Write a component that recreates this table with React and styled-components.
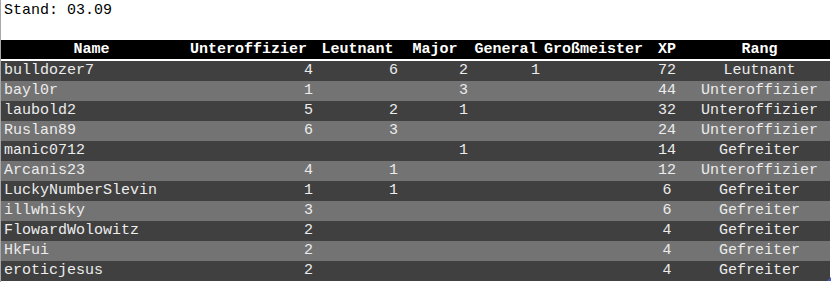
import React from "react";
import styled, { createGlobalStyle } from "styled-components";

const Global = createGlobalStyle`
  html, body { margin: 0; padding: 0; background: #fff; }
  body { font-family: "Liberation Mono", "Courier New", monospace; font-size: 15px; }
`;

const Page = styled.div`
  position: relative;
  width: 831px;
  height: 282px;
  border-left: 1px solid #a8a8a8;
  overflow: hidden;
`;

const StandBar = styled.div`
  height: 40px;
  box-sizing: border-box;
  padding: 2px 3px;
  line-height: 17px;
  color: #000;
`;

const Table = styled.table`
  border-collapse: collapse;
  table-layout: fixed;
  width: 829px;
  color: #ececec;
  font-family: "Liberation Mono", "Courier New", monospace;
  font-size: 15px;
`;

const HeadRow = styled.tr`
  background: #000;
  height: 19px;
  border-bottom: 2px solid #fff;
`;

const Th = styled.th`
  font-weight: bold;
  color: #fff;
  padding: 0;
  line-height: 19px;
  text-align: center;
  white-space: nowrap;
  overflow: visible;
`;

const Row = styled.tr`
  background: ${(p) => (p.$light ? "#737373" : "#404040")};
  height: 20px;
`;

const Td = styled.td`
  padding: 0 ${(p) => (p.$align === "right" ? "2px" : "0")} 0 ${(p) => (p.$align === "left" ? "3px" : "0")};
  line-height: 20px;
  text-align: ${(p) => p.$align};
  white-space: nowrap;
`;

const Grip = styled.svg`
  position: absolute;
  right: 1px;
  bottom: 1px;
`;

const cols = [
  { key: "name", label: "Name", width: 181, align: "left" },
  { key: "u", label: "Unteroffizier", width: 133, align: "right" },
  { key: "l", label: "Leutnant", width: 85, align: "right" },
  { key: "m", label: "Major", width: 70, align: "right" },
  { key: "g", label: "General", width: 72, align: "right" },
  { key: "gm", label: "Großmeister", width: 103, align: "right" },
  { key: "xp", label: "XP", width: 44, align: "center" },
  { key: "rang", label: "Rang", width: 141, align: "center" },
];

const rows = [
  { name: "bulldozer7", u: 4, l: 6, m: 2, g: 1, xp: 72, rang: "Leutnant" },
  { name: "bayl0r", u: 1, m: 3, xp: 44, rang: "Unteroffizier" },
  { name: "laubold2", u: 5, l: 2, m: 1, xp: 32, rang: "Unteroffizier" },
  { name: "Ruslan89", u: 6, l: 3, xp: 24, rang: "Unteroffizier" },
  { name: "manic0712", m: 1, xp: 14, rang: "Gefreiter" },
  { name: "Arcanis23", u: 4, l: 1, xp: 12, rang: "Unteroffizier" },
  { name: "LuckyNumberSlevin", u: 1, l: 1, xp: 6, rang: "Gefreiter" },
  { name: "illwhisky", u: 3, xp: 6, rang: "Gefreiter" },
  { name: "FlowardWolowitz", u: 2, xp: 4, rang: "Gefreiter" },
  { name: "HkFui", u: 2, xp: 4, rang: "Gefreiter" },
  { name: "eroticjesus", u: 2, xp: 4, rang: "Gefreiter" },
];

export default function App() {
  return (
    <>
      <Global />
      <Page>
        <StandBar>Stand: 03.09</StandBar>
        <Table>
          <colgroup>
            {cols.map((c) => (
              <col key={c.key} style={{ width: c.width }} />
            ))}
          </colgroup>
          <thead>
            <HeadRow>
              {cols.map((c) => (
                <Th key={c.key}>{c.label}</Th>
              ))}
            </HeadRow>
          </thead>
          <tbody>
            {rows.map((r, i) => (
              <Row key={r.name} $light={i % 2 === 1}>
                {cols.map((c) => (
                  <Td key={c.key} $align={c.align}>
                    {r[c.key] ?? ""}
                  </Td>
                ))}
              </Row>
            ))}
          </tbody>
        </Table>
        <Grip width="4" height="4" viewBox="0 0 4 4">
          <polygon points="4,0 4,4 0,4" fill="#4a5cb8" />
        </Grip>
      </Page>
    </>
  );
}
